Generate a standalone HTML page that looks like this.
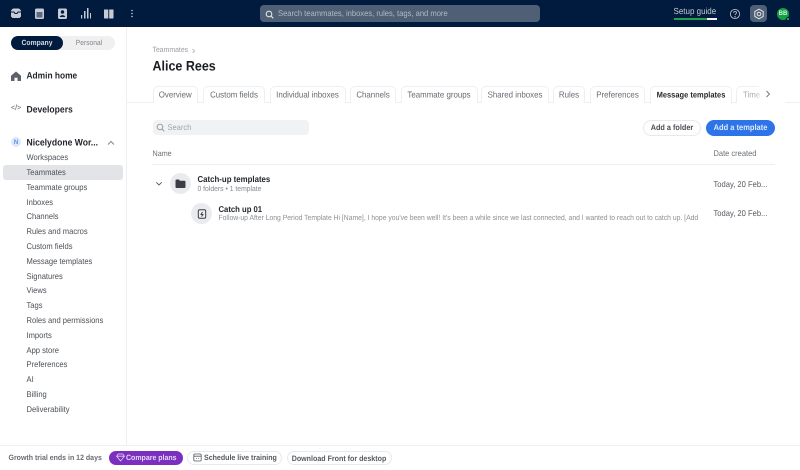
<!DOCTYPE html>
<html><head><meta charset="utf-8"><style>
html,body{margin:0;padding:0;width:800px;height:470px;overflow:hidden;background:#fff;font-family:"Liberation Sans",sans-serif;text-rendering:geometricPrecision;}
.t{position:absolute;white-space:nowrap;line-height:12px;height:12px;filter:blur(.3px);transform:scaleY(1.1);}
.b{position:absolute;box-sizing:border-box;}
.s{left:26.500px;font-size:7.600px;color:#4c5157;margin-top:.7px;}
.tab{position:absolute;top:86px;height:17px;box-sizing:border-box;border:1px solid #eeeff0;border-bottom:none;border-radius:5px 5px 0 0;font-size:7.900px;line-height:15px;color:#666b71;text-align:center;background:#fff;white-space:nowrap;overflow:hidden;}
.tab span{filter:blur(.3px);display:inline-block;transform:scaleY(1.1);}
svg{position:absolute;filter:blur(.3px);}
</style></head><body>
<div class="b" style="left:0;top:0;width:800px;height:27px;background:#001b3d;"></div>
<svg style="left:0;top:0" width="145" height="27" fill="#c6ccd5">
<path d="M11 10.500l2-2h6l2 2v6l-1.500 1.500h-7L11 16.500z"/><path d="M11 12h3l1 1.500h2l1-1.500h3" stroke="#001b3d" stroke-width="1" fill="none"/>
<rect x="35" y="8.500" width="9" height="10.500" rx="1.500"/><rect x="36.500" y="12" width="6" height="5.500" fill="#001b3d" opacity=".55"/>
<rect x="58" y="8.500" width="9" height="10.500" rx="1.500"/><circle cx="62.500" cy="12" r="1.700" fill="#001b3d"/><path d="M59.800 17c.3-2.500 5.100-2.500 5.400 0z" fill="#001b3d"/>
<rect x="81" y="15" width="1.200" height="3.500"/><rect x="84" y="11" width="1.500" height="7.500"/><rect x="87" y="8" width="1.500" height="10.500"/><rect x="90" y="13" width="1" height="5.500"/>
<path d="M104 9.500h4.300v9H104.500l-.5-.5zM109.200 9.500h4.300v8.500l-.5.500h-3.800z"/>
<circle cx="132" cy="10.500" r=".8"/><circle cx="132" cy="13.500" r=".8"/><circle cx="132" cy="16.500" r=".8"/>
</svg>
<div class="b" style="left:260px;top:5px;width:280px;height:17px;background:#4f6076;border-radius:4px;"></div>
<svg style="left:265px;top:10px" width="9" height="9" fill="none" stroke="#dfe3e8" stroke-width="1.100"><circle cx="4" cy="4" r="2.800"/><path d="M6 6l2.300 2.300"/></svg>
<div class="t" style="left:278px;top:8px;font-size:7.600px;color:#b0b9c4;">Search teammates, inboxes, rules, tags, and more</div>
<div class="t" style="left:673.500px;top:6px;font-size:8px;color:#c4cad2;">Setup guide</div>
<div class="b" style="left:674px;top:18px;width:33px;height:2px;background:#21a04a;"></div>
<div class="b" style="left:707px;top:18px;width:9.500px;height:2px;background:#f2f2f2;"></div>
<svg style="left:729px;top:8px" width="12" height="12" fill="none" stroke="#b4bcc6" stroke-width=".9"><circle cx="6" cy="6" r="4.600"/><path d="M4.600 4.800c.2-1.800 2.900-1.700 2.900 0 0 1.200-1.500 1.200-1.500 2.300"/><circle cx="6" cy="8.800" r=".3"/></svg>
<div class="b" style="left:750px;top:5px;width:17px;height:17px;background:#4f6076;border-radius:4px;"></div>
<svg style="left:753px;top:8px" width="12" height="12" fill="none" stroke="#e2e5e9" stroke-width="1"><path d="M6 1.200l4.200 2.400v4.800L6 10.800 1.800 8.400V3.600z"/><circle cx="6" cy="6" r="1.800"/></svg>
<div class="b" style="left:777px;top:8px;width:12px;height:12px;border-radius:50%;background:#12a043;"></div>
<div class="t" style="left:777px;top:8px;width:12px;text-align:center;font-size:6px;font-weight:bold;color:#d5efdc;">BB</div>
<div class="b" style="left:786px;top:17px;width:4px;height:4px;border-radius:50%;background:#2ccf62;border:1px solid #001b3d;"></div>

<div class="b" style="left:126px;top:27px;width:1px;height:418px;background:#eeeff0;"></div>
<div class="b" style="left:11px;top:36px;width:104px;height:14px;background:#f0f0f1;border-radius:7px;"></div>
<div class="b" style="left:11px;top:36px;width:52px;height:14px;background:#001b3d;border-radius:7px;"></div>
<div class="t" style="left:11px;top:37.500px;width:52px;text-align:center;font-size:6.800px;font-weight:bold;color:#d4dae1;">Company</div>
<div class="t" style="left:63px;top:37.500px;width:52px;text-align:center;font-size:6.700px;color:#80858b;">Personal</div>
<svg style="left:10px;top:69.500px" width="12" height="12" fill="#5d6268"><path d="M6 1.500L11 5.700V11H7.500V7.800h-3V11H1V5.700z"/></svg>
<div class="t" style="left:26.500px;top:69px;font-size:8.400px;font-weight:bold;color:#22262b;">Admin home</div>
<div class="t" style="left:11px;top:103px;font-size:7px;color:#50555b;">&lt;/&gt;</div>
<div class="t" style="left:26.500px;top:102.500px;font-size:8.600px;font-weight:bold;color:#22262b;">Developers</div>
<div class="b" style="left:11px;top:137px;width:10px;height:10px;border-radius:50%;background:#dce7fb;"></div>
<div class="t" style="left:11px;top:136.500px;width:10px;text-align:center;font-size:6px;font-weight:bold;color:#5b8ee6;">N</div>
<div class="t" style="left:26.500px;top:136px;font-size:8.600px;font-weight:bold;color:#22262b;">Nicelydone Wor...</div>
<svg style="left:107px;top:139.500px" width="8" height="6" fill="none" stroke="#82878d" stroke-width="1"><path d="M1 4.500l3-3 3 3"/></svg>
<div class="b" style="left:3px;top:165px;width:120px;height:15px;background:#e2e4e8;border-radius:3px;"></div>
<div class="t s" style="top:151px;">Workspaces</div>
<div class="t s" style="top:166px;">Teammates</div>
<div class="t s" style="top:181px;">Teammate groups</div>
<div class="t s" style="top:196px;">Inboxes</div>
<div class="t s" style="top:210.500px;">Channels</div>
<div class="t s" style="top:225.500px;">Rules and macros</div>
<div class="t s" style="top:240px;">Custom fields</div>
<div class="t s" style="top:255px;">Message templates</div>
<div class="t s" style="top:270px;">Signatures</div>
<div class="t s" style="top:284.500px;">Views</div>
<div class="t s" style="top:299.500px;">Tags</div>
<div class="t s" style="top:314px;">Roles and permissions</div>
<div class="t s" style="top:329px;">Imports</div>
<div class="t s" style="top:344px;">App store</div>
<div class="t s" style="top:358.500px;">Preferences</div>
<div class="t s" style="top:373.500px;">AI</div>
<div class="t s" style="top:388px;">Billing</div>
<div class="t s" style="top:403px;">Deliverability</div>

<div class="t" style="left:152.500px;top:44.500px;font-size:6.900px;color:#9a9ea3;">Teammates</div>
<svg style="left:190.500px;top:48px" width="5" height="6" fill="none" stroke="#a5a9ae" stroke-width=".8"><path d="M1.500 1l2 2-2 2"/></svg>
<div class="t" style="left:152.500px;top:58.500px;font-size:12.500px;line-height:15px;height:15px;font-weight:bold;color:#1a1d21;">Alice Rees</div>

<div class="b" style="left:127px;top:102px;width:673px;height:1px;background:#eeeff0;"></div>
<div class="tab" style="left:152.500px;width:45.500px;"><span>Overview</span></div>
<div class="tab" style="left:203px;width:62px;"><span>Custom fields</span></div>
<div class="tab" style="left:269.500px;width:76px;"><span>Individual inboxes</span></div>
<div class="tab" style="left:350px;width:46px;"><span>Channels</span></div>
<div class="tab" style="left:400.500px;width:77px;"><span>Teammate groups</span></div>
<div class="tab" style="left:481px;width:68px;"><span>Shared inboxes</span></div>
<div class="tab" style="left:553px;width:32px;"><span>Rules</span></div>
<div class="tab" style="left:590px;width:55px;"><span>Preferences</span></div>
<div class="tab" style="left:650px;width:82px;color:#26292e;font-weight:bold;height:18px;font-size:7.500px;"><span>Message templates</span></div>
<div class="tab" style="left:736px;width:50px;text-align:left;padding-left:6px;color:#a8abaf;"><span>Time</span></div>
<div class="b" style="left:755px;top:86px;width:31px;height:16px;background:linear-gradient(90deg,rgba(255,255,255,0),#fff 25%);"></div>
<svg style="left:765px;top:90px" width="6" height="8" fill="none" stroke="#6f7479" stroke-width=".9"><path d="M1.500 1l3 3-3 3"/></svg>

<div class="b" style="left:152.500px;top:120px;width:156px;height:15px;background:#f1f2f4;border-radius:4px;"></div>
<svg style="left:156px;top:123px" width="9" height="9" fill="none" stroke="#91969b" stroke-width=".9"><circle cx="4" cy="4" r="2.800"/><path d="M6 6l2.300 2.300"/></svg>
<div class="t" style="left:167.500px;top:121.500px;font-size:7.500px;color:#a0a4a9;">Search</div>
<div class="b" style="left:643px;top:120px;width:58px;height:15.500px;background:#fff;border:1px solid #e8e9ea;border-radius:8px;"></div>
<div class="t" style="left:643px;top:121.500px;width:58px;text-align:center;font-size:7.300px;font-weight:bold;color:#4a4e54;">Add a folder</div>
<div class="b" style="left:706px;top:119.500px;width:69px;height:16px;background:#2d74e8;border-radius:8px;"></div>
<div class="t" style="left:706px;top:121.500px;width:69px;text-align:center;font-size:7.500px;font-weight:bold;color:#dfe9fa;">Add a template</div>
<div class="t" style="left:152.500px;top:148px;font-size:7.200px;color:#6b7076;">Name</div>
<div class="t" style="left:713.500px;top:148px;font-size:7.500px;color:#6b7076;">Date created</div>
<div class="b" style="left:152px;top:164px;width:623px;height:1px;background:#eeeff0;"></div>

<svg style="left:155px;top:181px" width="8" height="6" fill="none" stroke="#55595f" stroke-width=".9"><path d="M1.300 1.300l2.700 2.700 2.700-2.700"/></svg>
<div class="b" style="left:170px;top:173px;width:21px;height:21px;border-radius:50%;background:#e9ebee;"></div>
<svg style="left:175px;top:179px" width="11" height="10" fill="#3b3f45"><path d="M.5 1.500q0-1 1-1h2.500l1 1.200h4.500q1 0 1 1v5.300q0 1-1 1h-8q-1 0-1-1z"/></svg>
<div class="t" style="left:197.500px;top:173.500px;font-size:7.850px;font-weight:bold;color:#25282d;">Catch-up templates</div>
<div class="t" style="left:197.500px;top:183.500px;font-size:6.800px;color:#84888d;">0 folders • 1 template</div>
<div class="t" style="left:713.500px;top:178.500px;font-size:7.600px;color:#55595f;">Today, 20 Feb...</div>

<div class="b" style="left:191px;top:203px;width:21px;height:21px;border-radius:50%;background:#e9ebee;"></div>
<svg style="left:197px;top:209px" width="10" height="10" fill="none" stroke="#3b3f45" stroke-width="1"><rect x="1.300" y=".8" width="7.400" height="8.400" rx="1.300"/><path d="M5.500 3L4 5.500h2L4.500 7.500" stroke-width=".9"/></svg>
<div class="t" style="left:218.500px;top:203.500px;font-size:7.700px;font-weight:bold;color:#25282d;">Catch up 01</div>
<div class="t" style="left:218.500px;top:213px;width:481px;overflow:hidden;font-size:6.800px;color:#8b8f94;">Follow-up After Long Period Template Hi [Name], I hope you've been well! It's been a while since we last connected, and I wanted to reach out to catch up. [Add a personal note]</div>
<div class="t" style="left:713.500px;top:208px;font-size:7.600px;color:#55595f;">Today, 20 Feb...</div>

<div class="b" style="left:0;top:445px;width:800px;height:1px;background:#eeeff0;"></div>
<div class="t" style="left:8.500px;top:452.600px;font-size:7px;color:#4e5258;font-weight:bold;opacity:.85;">Growth trial ends in 12 days</div>
<div class="b" style="left:109px;top:451px;width:74px;height:14px;background:#7b2fbe;border-radius:7px;"></div>
<svg style="left:115.500px;top:453px" width="9" height="9" fill="none" stroke="#e3d2f3" stroke-width=".8"><path d="M2.200 1h4.600l1.600 2.200L4.500 8 .6 3.200zM.6 3.200h7.800"/></svg>
<div class="t" style="left:126px;top:452.600px;font-size:7px;font-weight:bold;color:#e6d8f4;">Compare plans</div>
<div class="b" style="left:187px;top:451px;width:95px;height:14px;background:#fff;border:1px solid #e8e9ea;border-radius:7px;"></div>
<svg style="left:193px;top:453px" width="9" height="9" fill="none" stroke="#55595f" stroke-width=".8"><rect x=".8" y="1" width="7.400" height="7" rx="1"/><path d="M.8 3.200h7.400M3 5.500h.8M5 5.500h.8"/></svg>
<div class="t" style="left:204px;top:452.600px;font-size:7.050px;font-weight:bold;color:#55595f;">Schedule live training</div>
<div class="b" style="left:286.500px;top:451px;width:105px;height:14px;background:#fff;border:1px solid #e8e9ea;border-radius:7px;"></div>
<div class="t" style="left:286.500px;top:452.600px;width:105px;text-align:center;font-size:7.100px;font-weight:bold;color:#55595f;">Download Front for desktop</div>
</body></html>
